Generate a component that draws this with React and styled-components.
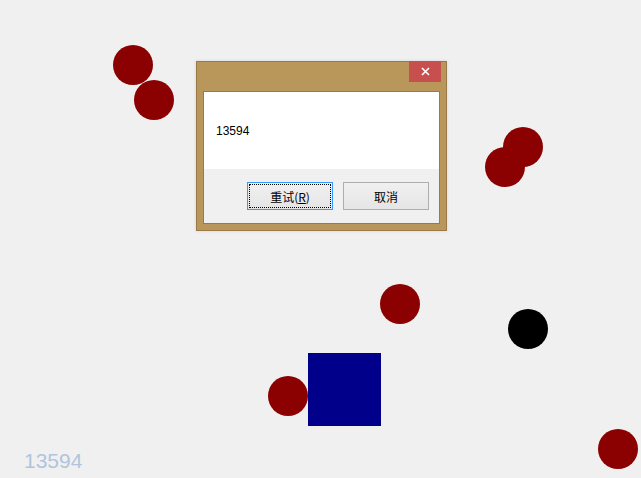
import React from "react";
import styled, { createGlobalStyle } from "styled-components";

const Global = createGlobalStyle`
  html, body { margin: 0; padding: 0; background: #f0f0f0; }
  body { width: 641px; height: 478px; overflow: hidden; font-family: "Liberation Sans", "Noto Sans CJK SC", sans-serif; }
`;

const Canvas = styled.div`
  position: relative;
  width: 641px;
  height: 478px;
  overflow: hidden;
  background: #f0f0f0;
`;

const Ball = styled.div`
  position: absolute;
  width: 40px;
  height: 40px;
  border-radius: 50%;
  background: ${(p) => p.$color || "#8b0000"};
`;

const Block = styled.div`
  position: absolute;
  left: 308px;
  top: 353px;
  width: 73px;
  height: 73px;
  background: #00008b;
`;

const Score = styled.div`
  position: absolute;
  left: 24px;
  top: 450px;
  font-family: "Liberation Sans", Arial, sans-serif;
  font-size: 21px;
  line-height: 21px;
  color: #b0c4de;
`;

const Dialog = styled.div`
  position: absolute;
  left: 196px;
  top: 61px;
  width: 251px;
  height: 170px;
  box-sizing: border-box;
  border: 1px solid #9a7a4a;
  background: #b9975b;
  padding: 0 6px 6px 6px;
  display: flex;
  flex-direction: column;
  box-shadow: 0 0 3px rgba(0, 0, 0, 0.12);
`;

const TitleBar = styled.div`
  height: 29px;
  flex: none;
`;

const CloseButton = styled.div`
  position: absolute;
  top: -1px;
  right: 5px;
  width: 32px;
  height: 21px;
  background: #c7504f;
  display: flex;
  align-items: center;
  justify-content: center;
`;

const Client = styled.div`
  flex: 1;
  border: 1px solid #9a7a4a;
  background: #f0f0f0;
  display: flex;
  flex-direction: column;
`;

const MessageArea = styled.div`
  height: 77px;
  background: #ffffff;
  display: flex;
  align-items: center;
  padding-left: 12px;
  font-family: "Liberation Sans", "Noto Sans CJK SC", sans-serif;
  font-size: 12px;
  color: #000;
`;

const ButtonRow = styled.div`
  flex: 1;
  display: flex;
  justify-content: flex-end;
  align-items: flex-start;
  gap: 10px;
  padding: 13px 10px 0 0;
`;

const Button = styled.div`
  position: relative;
  width: 86px;
  height: 28px;
  box-sizing: border-box;
  border: 1px solid ${(p) => (p.$focused ? "#3399ff" : "#adadad")};
  background: linear-gradient(#f0f0f0, #e5e5e5);
  display: flex;
  align-items: center;
  justify-content: center;
  font-family: "Noto Sans CJK SC", sans-serif;
  font-size: 12px;
  color: #000;
  ${(p) =>
    p.$focused &&
    `&::after {
      content: "";
      position: absolute;
      inset: 1px;
      border: 1px dotted #000;
    }`}
`;

const Mnemonic = styled.span`
  text-decoration: underline;
  text-underline-offset: 1px;
`;

const balls = [
  [113, 45],
  [134, 80],
  [503, 127],
  [485, 147],
  [380, 284],
  [268, 376],
  [598, 429],
];

export default function App() {
  return (
    <>
      <Global />
      <Canvas>
        {balls.map(([x, y], i) => (
          <Ball key={i} style={{ left: x, top: y }} />
        ))}
        <Ball $color="#000" style={{ left: 508, top: 309 }} />
        <Block />
        <Score>13594</Score>
        <Dialog>
          <TitleBar />
          <CloseButton>
            <svg width="9" height="9" viewBox="0 0 9 9">
              <path d="M1 1 L8 8 M8 1 L1 8" stroke="#fff" strokeWidth="1.6" />
            </svg>
          </CloseButton>
          <Client>
            <MessageArea>13594</MessageArea>
            <ButtonRow>
              <Button $focused>
                重试(<Mnemonic>R</Mnemonic>)
              </Button>
              <Button>取消</Button>
            </ButtonRow>
          </Client>
        </Dialog>
      </Canvas>
    </>
  );
}
